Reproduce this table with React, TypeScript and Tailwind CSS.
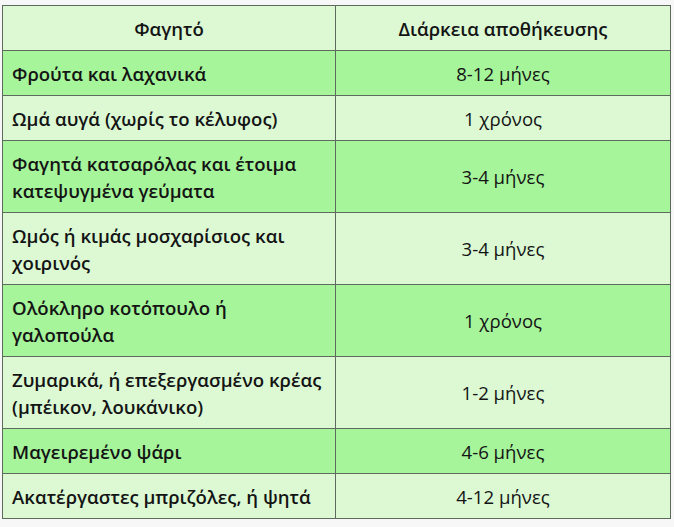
import React from "react";

const rows: { food: string[]; dur: string; green: boolean }[] = [
  { food: ["Φρούτα και λαχανικά"], dur: "8-12 μήνες", green: true },
  { food: ["Ωμά αυγά (χωρίς το κέλυφος)"], dur: "1 χρόνος", green: false },
  { food: ["Φαγητά κατσαρόλας και έτοιμα", "κατεψυγμένα γεύματα"], dur: "3-4 μήνες", green: true },
  { food: ["Ωμός ή κιμάς μοσχαρίσιος και", "χοιρινός"], dur: "3-4 μήνες", green: false },
  { food: ["Ολόκληρο κοτόπουλο ή", "γαλοπούλα"], dur: "1 χρόνος", green: true },
  { food: ["Ζυμαρικά, ή επεξεργασμένο κρέας", "(μπέικον, λουκάνικο)"], dur: "1-2 μήνες", green: false },
  { food: ["Μαγειρεμένο ψάρι"], dur: "4-6 μήνες", green: true },
  { food: ["Ακατέργαστες μπριζόλες, ή ψητά"], dur: "4-12 μήνες", green: false },
];

export default function App() {
  return (
    <div
      className="w-[674px] h-[527px] bg-[#f7f7f7] pt-[5px] pl-[2px] text-[#141414]"
      style={{ fontFamily: '"Open Sans", "Noto Sans", sans-serif' }}
    >
      <table className="border-collapse w-[669px] text-[18.6px] leading-[27px]">
        <thead>
          <tr className="bg-[#dcf9d4]">
            <th className="w-[333px] border border-[#5d6a5d] py-[8.5px] px-[10px] text-center font-semibold">
              Φαγητό
            </th>
            <th className="border border-[#5d6a5d] py-[8.5px] px-[10px] text-center font-semibold">
              Διάρκεια αποθήκευσης
            </th>
          </tr>
        </thead>
        <tbody>
          {rows.map((r, i) => (
            <tr key={i} className={r.green ? "bg-[#a6f59b]" : "bg-[#dcf9d4]"}>
              <td className="border border-[#5d6a5d] py-[8.5px] pl-[9px] pr-[4px] text-left font-semibold">
                {r.food.map((l, j) => (
                  <div key={j} className="whitespace-nowrap">{l}</div>
                ))}
              </td>
              <td className="border border-[#5d6a5d] py-[8.5px] px-[10px] text-center font-normal">
                {r.dur}
              </td>
            </tr>
          ))}
        </tbody>
      </table>
    </div>
  );
}
